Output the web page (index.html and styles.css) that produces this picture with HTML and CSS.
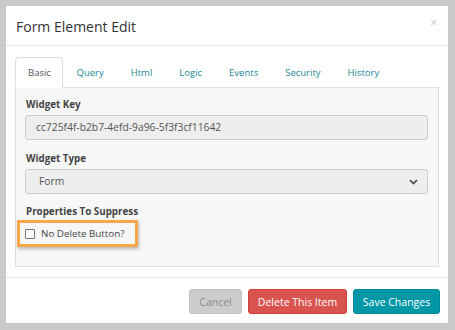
FILE: index.html
```html
<!DOCTYPE html>
<html>
<head>
<meta charset="utf-8">
<link rel="stylesheet" href="styles.css">
</head>
<body>
<div class="modal">
  <div class="modal-header">
    <span class="title">Form Element Edit</span>
    <span class="close">×</span>
  </div>
  <div class="modal-body">
    <div class="tabs">
      <div class="tab active">Basic</div>
      <div class="tab">Query</div>
      <div class="tab">Html</div>
      <div class="tab">Logic</div>
      <div class="tab">Events</div>
      <div class="tab">Security</div>
      <div class="tab">History</div>
    </div>
    <div class="panel">
      <div class="field">
        <div class="label">Widget Key</div>
        <div class="input">cc725f4f-b2b7-4efd-9a96-5f3f3cf11642</div>
      </div>
      <div class="field">
        <div class="label">Widget Type</div>
        <div class="input select"><span class="sel-text">Form</span>
          <svg class="caret" width="9" height="6" viewBox="0 0 9 6"><path d="M1 1.2 L4.5 4.5 L8 1.2" fill="none" stroke="#555" stroke-width="1.8"/></svg>
        </div>
      </div>
      <div class="field">
        <div class="label">Properties To Suppress</div>
        <div class="highlight">
          <span class="checkbox"></span>
          <span class="cb-label">No Delete Button?</span>
        </div>
      </div>
    </div>
  </div>
  <div class="modal-footer">
    <button class="btn cancel">Cancel</button>
    <button class="btn delete">Delete This Item</button>
    <button class="btn save">Save Changes</button>
  </div>
</div>
</body>
</html>
```
FILE: styles.css
```css
html, body { margin: 0; padding: 0; }
body {
  background: #cacaca;
  font-family: "Open Sans", "Noto Sans", sans-serif;
  width: 455px;
  height: 330px;
  overflow: hidden;
}
.modal {
  margin: 6px 0 0 6px;
  width: 442px;
  height: 317px;
  background: #fff;
  display: flex;
  flex-direction: column;
}
.modal-header {
  border-bottom: 1px solid #e5e5e5;
  display: flex;
  align-items: center;
  justify-content: space-between;
  padding: 0 11px 0 10px;
  box-sizing: border-box;
  height: 40px;
}
.title {
  font-size: 14px;
  color: #333;
  margin-top: 1px;
}
.close {
  font-size: 12px;
  color: #c4c4c4;
  margin-top: -6px;
}
.modal-body {
  padding: 11px 9px 0 9px;
}
.tabs {
  display: flex;
  height: 30px;
  position: relative;
  z-index: 1;
}
.tab {
  font-size: 9.5px;
  color: #1a8a96;
  padding: 0 12.5px;
  line-height: 30px;
  height: 30px;
  box-sizing: border-box;
  border: 1px solid transparent;
  border-radius: 4px 4px 0 0;
}
.tab.active {
  color: #555;
  background: #fff;
  border-color: #ddd;
  border-bottom-color: #fff;
  height: 31px;
  width: 48px;
  padding: 0 0 0 12px;
}
.panel {
  background: #f7f7f7;
  border: 1px solid #ddd;
  height: 180px;
  box-sizing: border-box;
  padding: 10px 10px 0 9px;
}
.field { margin-bottom: 12px; }
.label {
  font-size: 9.8px;
  font-weight: bold;
  color: #444;
  margin-left: 1px;
  line-height: 14px;
  margin-bottom: 3px;
}
.input {
  height: 25px;
  box-sizing: border-box;
  background: #eee;
  border: 1px solid #ccc;
  border-radius: 3px;
  font-size: 10.3px;
  color: #555;
  padding: 0 10px;
  line-height: 23px;
}
.select {
  display: flex;
  align-items: center;
  justify-content: space-between;
  padding: 0 9px 0 13px;
}
.field:nth-child(2) { margin-bottom: 11px; }
.highlight {
  margin-left: -8px;
  width: 121px;
  height: 27px;
  box-sizing: border-box;
  border: 3px solid #f7a64a;
  box-shadow: 1px 2px 3px rgba(0,0,0,0.25);
  display: flex;
  align-items: center;
  padding-left: 5px;
  margin-top: -2px;
}
.checkbox {
  width: 8px;
  height: 8px;
  border: 1px solid #777;
  border-radius: 1px;
  background: #fff;
  margin-right: 6px;
  margin-top: 1px;
}
.cb-label {
  font-size: 9.8px;
  color: #444;
}
.modal-footer {
  margin-top: 10px;
  border-top: 1px solid #e5e5e5;
  display: flex;
  justify-content: flex-end;
  padding: 11px 8px 0 0;
  gap: 6px;
}
.btn {
  font-family: "Open Sans", "Noto Sans", sans-serif;
  font-size: 10.5px;
  height: 25px;
  border: 1px solid transparent;
  border-radius: 3px;
  padding: 0;
  color: #fff;
}
.cancel { background: #ccc; color: #8a8a8a; width: 53px; border-color: #c4c4c4; }
.delete { background: #d9534f; width: 99px; border-color: #d43f3a; }
.save { background: #0097a7; width: 87px; border-color: #008896; }
```
